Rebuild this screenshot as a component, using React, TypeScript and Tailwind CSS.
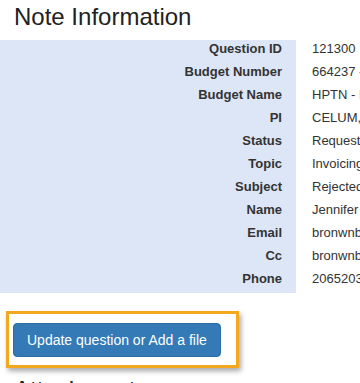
const rows: [string, string][] = [
  ["Question ID", "121300"],
  ["Budget Number", "664237 - HPTN LOC"],
  ["Budget Name", "HPTN - Leadership"],
  ["PI", "CELUM, CONNIE"],
  ["Status", "Requested"],
  ["Topic", "Invoicing"],
  ["Subject", "Rejected invoice"],
  ["Name", "Jennifer Brown"],
  ["Email", "bronwnbj@uw.edu"],
  ["Cc", "bronwnbj@uw.edu"],
  ["Phone", "2065203000"],
];

export default function App() {
  return (
    <div
      className="w-[360px] h-[383px] overflow-hidden bg-white text-[#333]"
      style={{ fontFamily: '"Liberation Sans", Arial, sans-serif' }}
    >
      <h1 className="pt-[4px] pl-[14px] text-[24px] leading-[26px] text-[#222] font-normal">
        Note Information
      </h1>

      <div className="mt-[10px] grid grid-cols-[296px_1fr] text-[13px] leading-[18px]">
        {rows.map(([label, value]) => (
          <div key={label} className="contents">
            <div className="h-[23px] bg-[#dde6f6] pr-[14px] text-right font-bold">
              {label}
            </div>
            <div className="h-[23px] pl-[16px] whitespace-nowrap overflow-hidden">
              {value}
            </div>
          </div>
        ))}
      </div>

      <div className="mt-[18px] ml-[6px] w-fit border-[3px] border-[#f4a81d] pl-[4px] pt-[9px] pr-[15px] pb-[8px] shadow-[2px_3px_5px_rgba(0,0,0,0.35)]">
        <button
          type="button"
          className="block rounded-[4px] border border-[#2e6da4] bg-[#337ab7] px-[13px] py-[6px] text-[14px] leading-[20px] text-white"
        >
          Update question or Add a file
        </button>
      </div>

      <h2 className="mt-[9px] pl-[14px] text-[24px] leading-[26px] text-[#222] font-normal">
        Attachments
      </h2>
    </div>
  );
}
